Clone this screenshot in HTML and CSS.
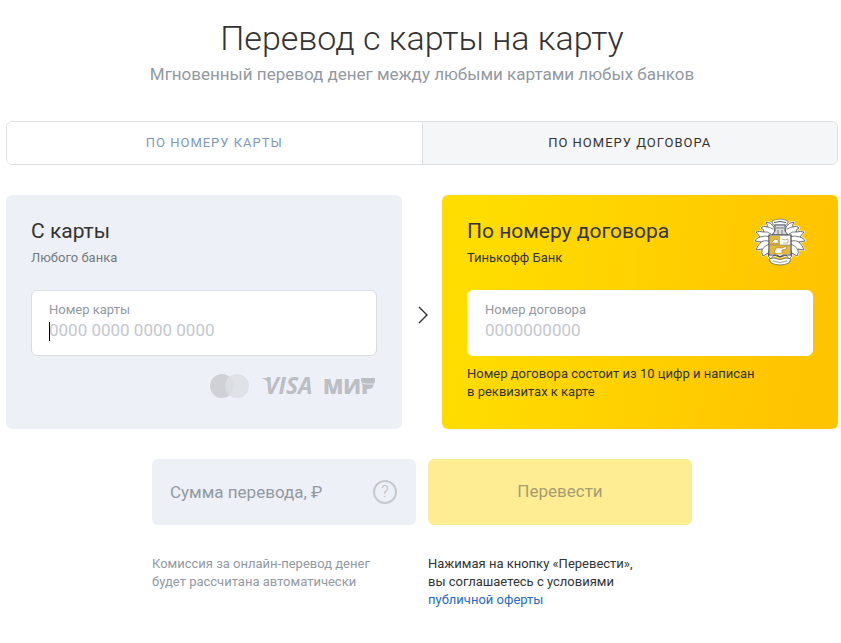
FILE: index.html
```html
<!DOCTYPE html>
<html lang="ru">

<head>
    <meta charset="UTF-8">
    <meta name="viewport" content="width=device-width, initial-scale=1.0">
    <title>Перевод с карты на карту</title>
    <link rel="stylesheet" href="styles.css">
</head>

<body>
    <main class="page">
        <header class="head">
            <h1 class="title">Перевод с карты на карту</h1>
            <p class="subtitle">Мгновенный перевод денег между любыми картами любых банков</p>
        </header>

        <div class="tabs">
            <button class="tab" type="button">По номеру карты</button>
            <button class="tab tab-active" type="button">По номеру договора</button>
        </div>

        <form class="form">
            <div class="cards">
                <section class="card">
                    <h2 class="card-title">С карты</h2>
                    <p class="card-bank">Любого банка</p>
                    <div class="field field-focus">
                        <label class="field-label" for="card-number">Номер карты</label>
                        <input class="field-input" id="card-number" type="text" placeholder="0000 0000 0000 0000">
                    </div>
                    <svg class="systems" width="168" height="26" viewBox="0 0 168 26" aria-hidden="true">
                        <circle cx="13" cy="13" r="12" fill="#cfd1d6" />
                        <circle cx="28" cy="13" r="12" fill="#dcdfe4" fill-opacity=".85" />
                        <path d="M52 5h8l1 6q-4-5-9-6z" fill="#bbbec3" />
                        <text class="logo logo-visa" x="56" y="21">VISA</text>
                        <text class="logo logo-mir" x="114" y="21">МИР</text>
                        <path d="M152 5h14q1 8-7 8h-4q-3-2-3-5z" fill="#bbbec3" />
                        <path d="M151 8q2 3 6 3h9" fill="none" stroke="#edf0f6" stroke-width=".8" />
                    </svg>
                </section>

                <svg class="arrow" width="10" height="18" viewBox="0 0 10 18" aria-hidden="true">
                    <path d="M1 1l8 8-8 8" fill="none" stroke="#333" stroke-width="1.4" />
                </svg>

                <section class="card card-bright">
                    <div class="card-head">
                        <div>
                            <h2 class="card-title">По номеру договора</h2>
                            <p class="card-bank">Тинькофф Банк</p>
                        </div>
                        <svg class="crest" width="52" height="48" viewBox="0 0 52 48" aria-hidden="true">
                            <g id="leaf" fill="#fff" stroke="#fff" stroke-width="2" stroke-linejoin="round">
                                <path d="M20 9q-3-5-8-5 2 3 1 5-4-2-6 1 3 1 3 4-5-1-8 0l4 5q-4 1-5 4l6 1q-4 4-5 8l6-1q-1 4 1 7l5-3q0 5 3 6l3-4 5 2-5-10 1-12z" />
                                <path d="M20 9q-3-5-8-5 2 3 1 5-4-2-6 1 3 1 3 4-5-1-8 0l4 5q-4 1-5 4l6 1q-4 4-5 8l6-1q-1 4 1 7l5-3q0 5 3 6l3-4 5 2-5-10 1-12z" stroke="#555a66" stroke-width=".9" />
                                <g fill="none" stroke="#555a66" stroke-width=".8">
                                    <path d="M19 11q-4-2-6-2m4 7q-4-3-7-2m7 5q-6-2-11 0m9 4q-5-1-8 1m8 2q-5 2-7 6m8-2q-2 3-1 6" />
                                </g>
                            </g>
                            <use href="#leaf" transform="matrix(-1 0 0 1 52 0)" />
                            <path d="M18 3q8-4 16 0l-1 4H19z" fill="#fff" stroke="#777" stroke-width=".8" />
                            <path d="M20 4.500q6-2 12 0" fill="none" stroke="#555a66" />
                            <path d="M21 7h10v6l3 4H18l3-4z" fill="#ddd" stroke="#555a66" />
                            <path d="M22 10h8m-6 2v4m4-4v4" fill="none" stroke="#555a66" stroke-width=".8" />
                            <path d="M15 17h22v20h-8l-3 2-3-2h-8z" fill="#fff" stroke="#444" stroke-width="1.2" />
                            <path d="M16 18h10v9h10v9h-8l-2 1-2-1h-8z" fill="#e3b836" />
                            <path d="M18 24l3-3 3 1 1 3h-7m10-4l3 1 3-1v4h-5m-9 10l2-5h6l5-2-1 3-4 1v3m-7-1v3" fill="#fff" stroke="#8b6c20" stroke-width=".5" />
                            <path d="M15 27h22" stroke="#777" stroke-width=".6" />
                            <path d="M15 41l5-1q6 3 12 0l5 1-2 4q-9 4-18 0z" fill="#fff" stroke="#666" stroke-width=".8" />
                            <path d="M19 43q7 3 14 0" fill="none" stroke="#888" stroke-width=".8" />
                        </svg>
                    </div>
                    <div class="field">
                        <label class="field-label" for="contract-number">Номер договора</label>
                        <input class="field-input" id="contract-number" type="text" placeholder="0000000000">
                    </div>
                    <p class="hint">Номер договора состоит из 10 цифр и написан<br>в реквизитах к карте</p>
                </section>
            </div>

            <div class="bottom">
                <div class="bottom-col">
                    <div class="sum">
                        <input class="sum-input" type="text" placeholder="Сумма перевода, ₽" aria-label="Сумма перевода, ₽">
                        <button class="help" type="button">?</button>
                    </div>
                    <p class="note note-gray">Комиссия за онлайн-перевод денег<br>будет рассчитана автоматически</p>
                </div>
                <div class="bottom-col">
                    <button class="submit" type="submit" disabled>Перевести</button>
                    <p class="note">Нажимая на кнопку «Перевести»,<br>вы соглашаетесь с условиями<br><a class="link" href="#">публичной оферты</a></p>
                </div>
            </div>
        </form>
    </main>
</body>

</html>
```
FILE: styles.css
```css
* {
    box-sizing: border-box;
}

body {
    margin: 0;
    background: #fff;
    color: #333;
    font-family: Roboto, "Liberation Sans", sans-serif;
    font-size: 13px;
    line-height: 18px;
}

h1, h2, p {
    margin: 0;
    font-weight: 400;
}

input, button {
    font-family: inherit;
}

.page {
    padding: 16px 3px 16px 6px;
}

.head {
    text-align: center;
}

.title {
    font-size: 34px;
    font-weight: 300;
    line-height: 44px;
}

.subtitle {
    margin-top: 2px;
    color: #9299a2;
    font-size: 17px;
    line-height: 24px;
}

/* tabs */
.tabs {
    display: flex;
    height: 44px;
    margin-top: 35px;
    border: 1px solid #dddfe3;
    border-radius: 6px;
    overflow: hidden;
}

.tab {
    flex: 1;
    padding: 0 0 2px;
    border: 0;
    background: #fff;
    color: #7c9ab8;
    font-size: 13px;
    letter-spacing: 1px;
    text-transform: uppercase;
}

.tab-active {
    border-left: 1px solid #dddfe3;
    background: #f5f6f8;
    color: #333;
}

/* cards */
.cards {
    display: flex;
    align-items: center;
    margin-top: 30px;
}

.card {
    flex: 1;
    align-self: stretch;
    min-height: 234px;
    padding: 23px 25px;
    border-radius: 6px;
    background: #edf0f6;
}

.card-bright {
    background: linear-gradient(100deg, #ffdd00 10%, #ffc400 90%);
}

.card-head {
    display: flex;
    justify-content: space-between;
}

.card-title {
    font-size: 21px;
    line-height: 26px;
}

.card-bank {
    margin-top: 5px;
    color: #757a80;
}

.card-bright .card-bank {
    color: #333;
}

.crest {
    margin-right: 7px;
}

.field {
    position: relative;
    height: 66px;
    margin-top: 23px;
    padding: 10px 17px;
    border: 1px solid #d9dde2;
    border-radius: 6px;
    background: #fff;
}

.card-bright .field {
    border-color: #fff;
}

.field-focus::after {
    content: "";
    position: absolute;
    top: 31px;
    left: 17px;
    width: 1px;
    height: 19px;
    background: #000;
}

.field-label {
    display: block;
    color: #9299a2;
}

.field-input {
    display: block;
    width: 100%;
    height: 22px;
    padding: 0;
    border: 0;
    outline: 0;
    background: none;
    font-size: 17px;
}

.field-input::placeholder {
    color: #c4c7cc;
    opacity: 1;
}

.systems {
    display: block;
    margin: 17px 0 0 auto;
}

.logo {
    fill: #bbbec3;
    font-family: "Open Sans", sans-serif;
    font-size: 23px;
    font-weight: 700;
}

.logo-visa {
    font-style: italic;
}

.logo-mir {
    font-size: 21px;
    font-weight: 800;
}

.arrow {
    margin: 6px 14px 0 16px;
}

.hint {
    margin-top: 9px;
}

/* sum and submit */
.bottom {
    display: flex;
    justify-content: center;
    gap: 12px;
    margin-top: 30px;
}

.bottom-col {
    width: 264px;
}

.sum {
    display: flex;
    align-items: center;
    height: 66px;
    padding: 0 19px 0 18px;
    border-radius: 6px;
    background: #edf0f6;
}

.sum-input {
    flex: 1;
    min-width: 0;
    padding: 0;
    border: 0;
    outline: 0;
    background: none;
    font-size: 17px;
}

.sum-input::placeholder {
    color: #9299a2;
    opacity: 1;
}

.help {
    width: 24px;
    height: 24px;
    padding: 0;
    border: 2px solid #c6c9ce;
    border-radius: 50%;
    background: none;
    color: #b4b8be;
    font-size: 16px;
    font-weight: 300;
    line-height: 20px;
}

.submit {
    display: block;
    width: 100%;
    height: 66px;
    padding: 0 0 2px;
    border: 0;
    border-radius: 6px;
    background: #ffed94;
    color: #a69d72;
    font-size: 17px;
}

.note {
    margin-top: 30px;
}

.note-gray {
    color: #9299a2;
}

.link {
    color: #2a6bc4;
    text-decoration: none;
}
```
